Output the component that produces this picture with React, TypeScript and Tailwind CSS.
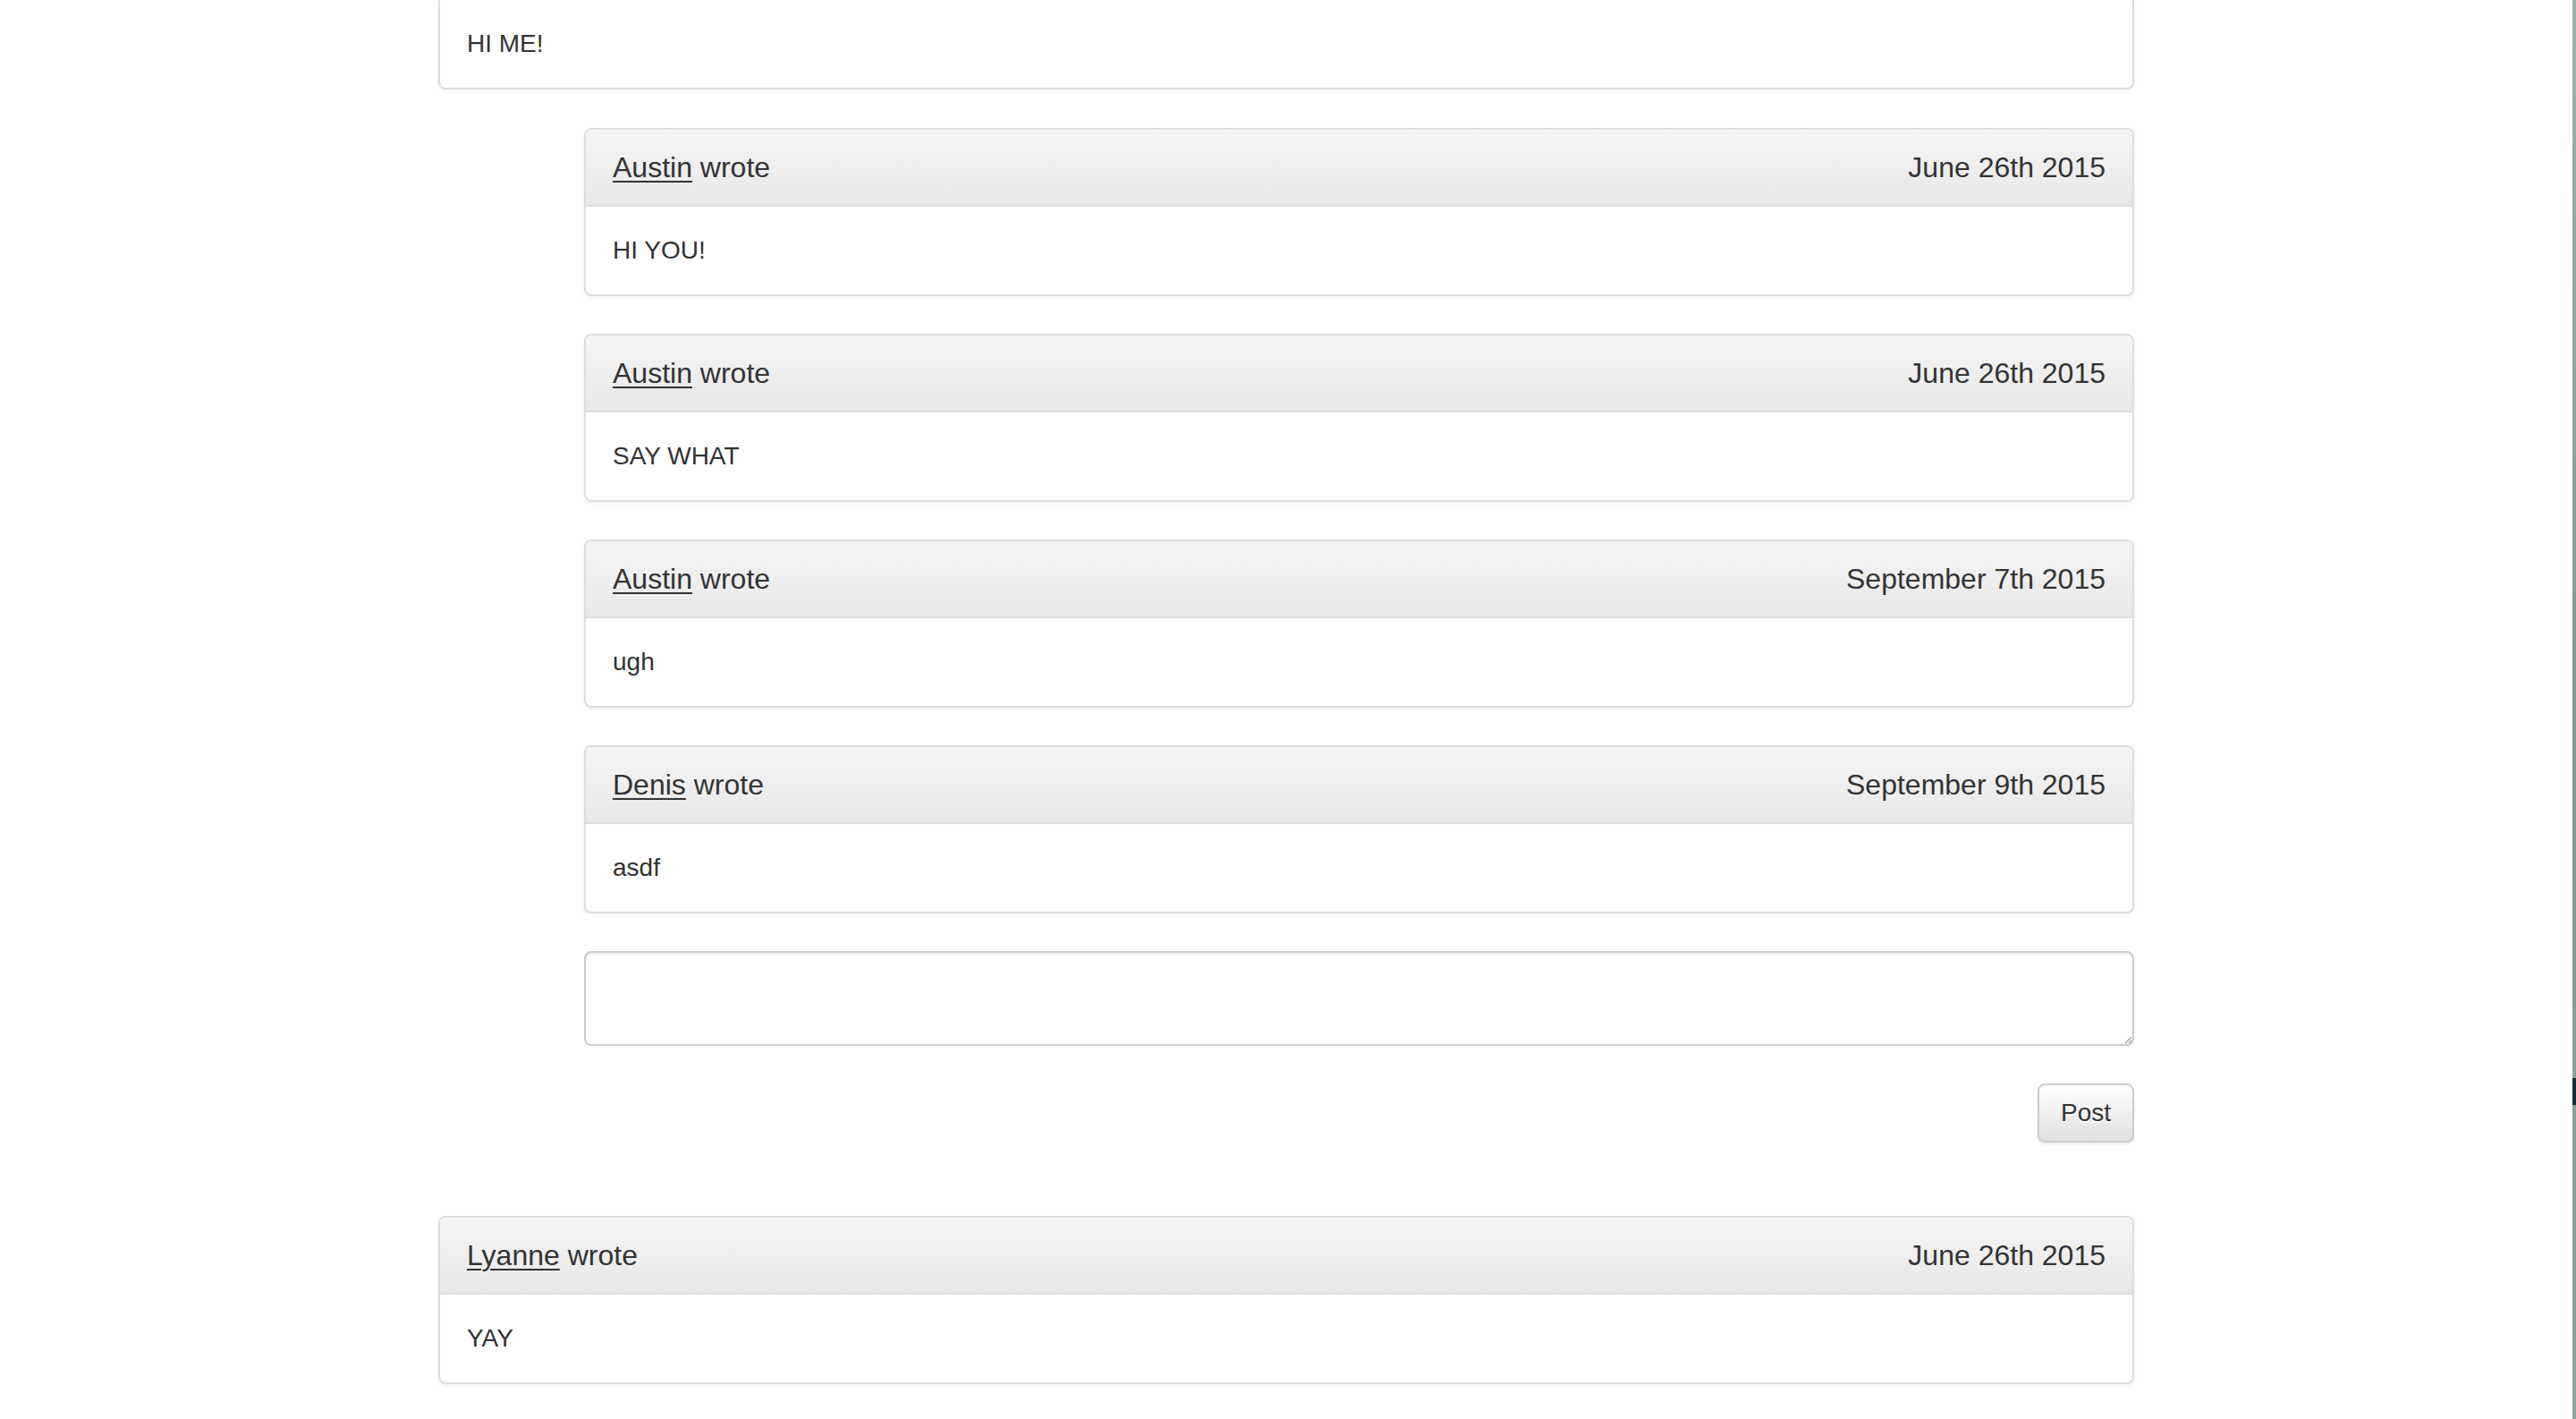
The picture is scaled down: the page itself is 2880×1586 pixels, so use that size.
import React from "react";

type Comment = { author: string; date: string; body: string };

const replies: Comment[] = [
  { author: "Austin", date: "June 26th 2015", body: "HI YOU!" },
  { author: "Austin", date: "June 26th 2015", body: "SAY WHAT" },
  { author: "Austin", date: "September 7th 2015", body: "ugh" },
  { author: "Denis", date: "September 9th 2015", body: "asdf" },
];

function Panel({ c }: { c: Comment }) {
  return (
    <div className="h-[188px] rounded-[8px] border-2 border-[#dddddd] bg-white shadow-[0_2px_4px_rgba(0,0,0,0.05)] overflow-hidden flex flex-col">
      <div className="h-[86px] shrink-0 border-b-2 border-[#dddddd] bg-linear-to-b from-[#f5f5f5] to-[#e8e8e8] px-[30px] flex items-center justify-between text-[32px] text-[#333333]">
        <span>
          <a className="underline underline-offset-[4px] decoration-[2px] text-[#333333]">{c.author}</a> wrote
        </span>
        <span>{c.date}</span>
      </div>
      <div className="flex-1 px-[30px] flex items-center text-[28px] text-[#333333]">{c.body}</div>
    </div>
  );
}

export default function App() {
  return (
    <div className="relative w-full h-[1586px] overflow-hidden bg-white font-['Liberation_Sans',Arial,sans-serif] text-[#333333]">
      <div className="ml-[490px] w-[1896px] flex flex-col">
        <div className="h-[100px] rounded-b-[8px] border-x-2 border-b-2 border-[#dddddd] bg-white shadow-[0_2px_4px_rgba(0,0,0,0.05)] px-[30px] flex items-center text-[28px]">
          HI ME!
        </div>
        <div className="ml-[163px] mt-[43px] flex flex-col gap-[42px]">
          {replies.map((c, i) => (
            <Panel key={i} c={c} />
          ))}
          <textarea className="block w-full h-[106px] rounded-[8px] border-2 border-[#cccccc] bg-white shadow-[inset_0_2px_2px_rgba(0,0,0,0.075)] outline-none resize-y" />
          <div className="flex justify-end">
            <button className="h-[66px] w-[108px] rounded-[8px] border-2 border-[#cccccc] bg-linear-to-b from-[#ffffff] to-[#e0e0e0] text-[28px] text-[#333333] [text-shadow:0_2px_0_#fff] shadow-[0_2px_2px_rgba(0,0,0,0.075)]">
              Post
            </button>
          </div>
        </div>
        <div className="mt-[82px]">
          <Panel c={{ author: "Lyanne", date: "June 26th 2015", body: "YAY" }} />
        </div>
      </div>
      <div className="absolute right-0 top-0 h-full w-[4px] bg-linear-to-b from-[#9bb3a6] via-[#7f9c8e] to-[#8aa597]" />
      <div className="absolute right-0 top-[1205px] h-[30px] w-[4px] bg-[#0f2d38]" />
    </div>
  );
}
